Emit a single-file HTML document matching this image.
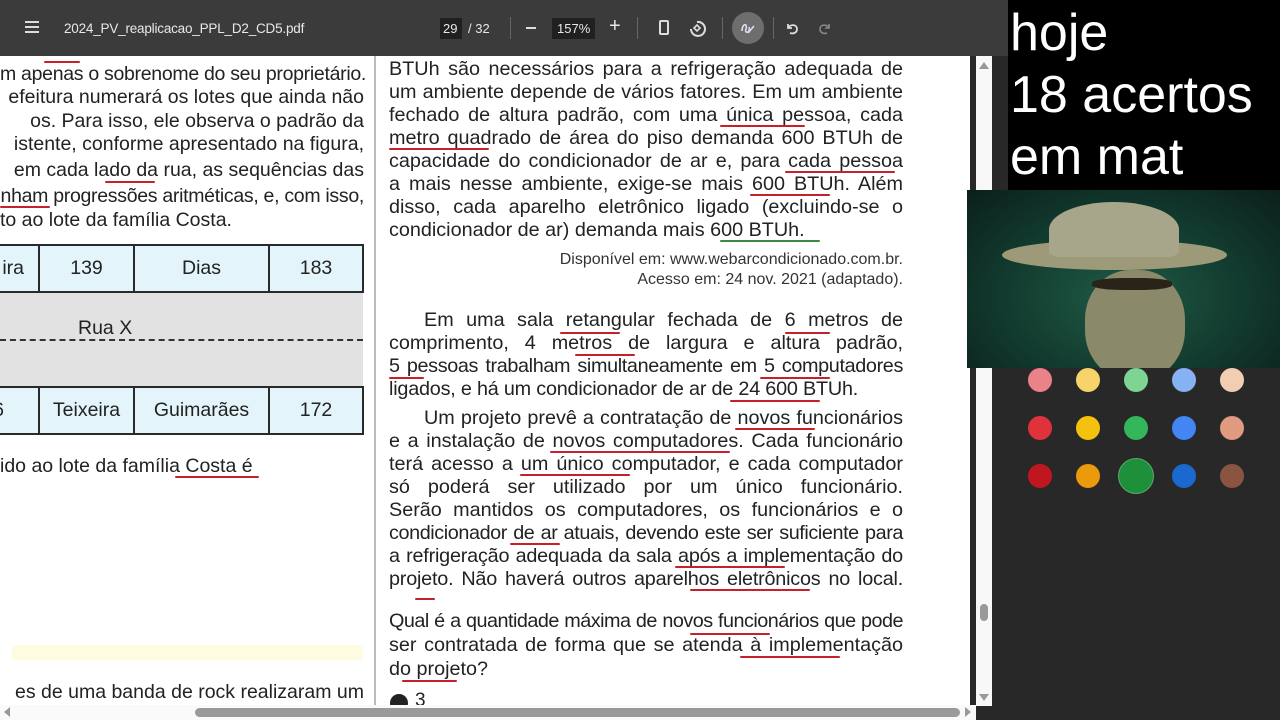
<!DOCTYPE html>
<html><head><meta charset="utf-8"><style>
*{margin:0;padding:0;box-sizing:border-box}
body{width:1280px;height:720px;overflow:hidden;position:relative;background:#282828;font-family:"Liberation Sans",sans-serif}
.abs{position:absolute}
.tb{left:0;top:0;width:1008px;height:56px;background:#3b3b3b;color:#e8e8e8}
.page{left:0;top:56px;width:970px;height:649px;background:#fff;overflow:hidden}
.rl{position:absolute;left:389px;width:514px;font-size:19.8px;color:#222;text-align:justify;text-align-last:justify;white-space:nowrap;line-height:22px}
.ll{position:absolute;left:0;width:364px;font-size:19.5px;color:#222;white-space:nowrap;line-height:22px;text-align:right}
.ul{position:absolute;height:2px;background:#c8202a;border-radius:1px}
.cell{position:absolute;background:#e3f5fb;border:2px solid #2a2a2a;font-size:19.5px;color:#222;display:flex;align-items:center;justify-content:center}
.dot{position:absolute;width:24px;height:24px;border-radius:50%}
</style></head><body>
<div class="abs tb">
 <div class="abs" style="left:25px;top:21px;width:14px;height:2px;background:#ddd;box-shadow:0 5px 0 #ddd,0 10px 0 #ddd"></div>
 <div class="abs" style="left:64px;top:21px;font-size:13.5px;letter-spacing:-0.2px">2024_PV_reaplicacao_PPL_D2_CD5.pdf</div>
 <div class="abs" style="left:440px;top:18px;width:22px;height:21px;background:#202020"></div>
 <div class="abs" style="left:443px;top:21px;font-size:13px">29</div>
 <div class="abs" style="left:468px;top:21px;font-size:13px">/ 32</div>
 <div class="abs" style="left:510px;top:17px;width:1px;height:22px;background:#666"></div>
 <div class="abs" style="left:526px;top:27px;width:10px;height:2px;background:#ddd"></div>
 <div class="abs" style="left:552px;top:18px;width:43px;height:21px;background:#202020"></div>
 <div class="abs" style="left:557px;top:21px;font-size:13px">157%</div>
 <div class="abs" style="left:609px;top:15px;font-size:20px">+</div>
 <div class="abs" style="left:637px;top:17px;width:1px;height:22px;background:#666"></div>
 <div class="abs" style="left:659px;top:20px;width:10px;height:15px;border:2px solid #ddd;border-radius:2px"></div>
 <svg class="abs" style="left:688px;top:19px" width="18" height="18"><path d="M9 3 A7 7 0 1 1 3 10" fill="none" stroke="#ddd" stroke-width="2"/><path d="M6 9 L9 6 L12 9 L9 12Z" fill="none" stroke="#ddd" stroke-width="1.6"/></svg>
 <div class="abs" style="left:722px;top:17px;width:1px;height:22px;background:#666"></div>
 <div class="abs" style="left:732px;top:12px;width:32px;height:32px;border-radius:50%;background:#6e6e6e"></div>
 <svg class="abs" style="left:739px;top:19px" width="18" height="18"><path d="M3 12 C3 4 9 4 7 10 C5 15 12 14 10 8 M9 14 L15 7" fill="none" stroke="#dde" stroke-width="1.6"/></svg>
 <div class="abs" style="left:773px;top:17px;width:1px;height:22px;background:#666"></div>
 <svg class="abs" style="left:784px;top:20px" width="16" height="16"><path d="M4 4 V8 H8 M4 8 C6 4 13 4 13 9 C13 13 9 14 6 13" fill="none" stroke="#ddd" stroke-width="1.8"/></svg>
 <svg class="abs" style="left:817px;top:20px" width="16" height="16"><path d="M12 4 V8 H8 M12 8 C10 4 3 4 3 9 C3 13 7 14 10 13" fill="none" stroke="#888" stroke-width="1.6"/></svg>
</div>
<div class="abs page">
 <div class="ll" style="top:7px;letter-spacing:-0.3px">m apenas o sobrenome do seu proprietário.</div>
 <div class="ll" style="top:30px">efeitura numerará os lotes que ainda não</div>
 <div class="ll" style="top:54px">os. Para isso, ele observa o padrão da</div>
 <div class="ll" style="top:77px">istente, conforme apresentado na figura,</div>
 <div class="ll" style="top:103px">em cada lado da rua, as sequências das</div>
 <div class="ll" style="top:129px;letter-spacing:-0.3px">nham progressões aritméticas, e, com isso,</div>
 <div class="ll" style="top:153px;text-align:left">to ao lote da família Costa.</div>
 <div class="abs" style="left:0;top:235px;width:363px;height:96px;background:#e2e2e2"></div>
 <div class="abs" style="left:0;top:283px;width:363px;border-top:2px dashed #333"></div>
 <div class="abs" style="left:78px;top:261px;font-size:19.5px;color:#222">Rua X</div>
 <div class="cell" style="left:-10px;top:188px;width:50px;height:49px;justify-content:flex-end;padding-right:14px">ira</div>
 <div class="cell" style="left:38px;top:188px;width:97px;height:49px">139</div>
 <div class="cell" style="left:133px;top:188px;width:137px;height:49px">Dias</div>
 <div class="cell" style="left:268px;top:188px;width:96px;height:49px">183</div>
 <div class="cell" style="left:-10px;top:330px;width:50px;height:49px;justify-content:flex-end;padding-right:34px">6</div>
 <div class="cell" style="left:38px;top:330px;width:97px;height:49px">Teixeira</div>
 <div class="cell" style="left:133px;top:330px;width:137px;height:49px">Guimarães</div>
 <div class="cell" style="left:268px;top:330px;width:96px;height:49px">172</div>
 <div class="ll" style="top:399px;text-align:left">ido ao lote da família Costa é</div>
 <div class="abs" style="left:12px;top:589px;width:351px;height:15px;background:#fdfbe0"></div>
 <div class="ll" style="top:625px">es de uma banda de rock realizaram um</div>
 <div class="ul" style="left:175px;top:420px;width:84px"></div>
 <div class="ul" style="left:44px;top:5px;width:36px"></div>
 <div class="ul" style="left:105px;top:125px;width:50px"></div>
 <div class="ul" style="left:0;top:150px;width:50px"></div>
 <div class="abs" style="left:374px;top:0;width:2px;height:649px;background:#bbb"></div>
 <div class="rl" style="top:2px">BTUh são necessários para a refrigeração adequada de</div>
 <div class="rl" style="top:25px">um ambiente depende de vários fatores. Em um ambiente</div>
 <div class="rl" style="top:48px">fechado de altura padrão, com uma única pessoa, cada</div>
 <div class="rl" style="top:71px">metro quadrado de área do piso demanda 600 BTUh de</div>
 <div class="rl" style="top:94px">capacidade do condicionador de ar e, para cada pessoa</div>
 <div class="rl" style="top:117px">a mais nesse ambiente, exige-se mais 600 BTUh. Além</div>
 <div class="rl" style="top:140px">disso, cada aparelho eletrônico ligado (excluindo-se o</div>
 <div class="rl" style="top:163px;text-align-last:left">condicionador de ar) demanda mais 600 BTUh.</div>
 <div class="abs" style="left:389px;width:514px;top:194px;font-size:16px;color:#333;text-align:right;line-height:20px">Disponível em: www.webarcondicionado.com.br.<br>Acesso em: 24 nov. 2021 (adaptado).</div>
 <div class="rl" style="top:253px;padding-left:35px">Em uma sala retangular fechada de 6 metros de</div>
 <div class="rl" style="top:276px">comprimento, 4 metros de largura e altura padrão,</div>
 <div class="rl" style="top:299px;letter-spacing:-0.35px">5 pessoas trabalham simultaneamente em 5 computadores</div>
 <div class="rl" style="top:322px;text-align-last:left;letter-spacing:-0.2px">ligados, e há um condicionador de ar de 24 600 BTUh.</div>
 <div class="rl" style="top:351px;padding-left:35px">Um projeto prevê a contratação de novos funcionários</div>
 <div class="rl" style="top:374px">e a instalação de novos computadores. Cada funcionário</div>
 <div class="rl" style="top:397px">terá acesso a um único computador, e cada computador</div>
 <div class="rl" style="top:420px">só poderá ser utilizado por um único funcionário.</div>
 <div class="rl" style="top:443px">Serão mantidos os computadores, os funcionários e o</div>
 <div class="rl" style="top:466px;letter-spacing:-0.4px">condicionador de ar atuais, devendo este ser suficiente para</div>
 <div class="rl" style="top:489px;letter-spacing:-0.2px">a refrigeração adequada da sala após a implementação do</div>
 <div class="rl" style="top:512px;letter-spacing:-0.2px">projeto. Não haverá outros aparelhos eletrônicos no local.</div>
 <div class="rl" style="top:554px;letter-spacing:-0.5px">Qual é a quantidade máxima de novos funcionários que pode</div>
 <div class="rl" style="top:578px">ser contratada de forma que se atenda à implementação</div>
 <div class="rl" style="top:602px;text-align-last:left">do projeto?</div>
 <div class="abs" style="left:390px;top:638px;width:18px;height:18px;border-radius:50%;background:#222"></div>
 <div class="abs" style="left:415px;top:634px;font-size:19px;color:#222">3</div>
 <div class="ul" style="left:720px;top:69px;width:85px"></div>
 <div class="ul" style="left:389px;top:92px;width:100px"></div>
 <div class="ul" style="left:785px;top:115px;width:110px"></div>
 <div class="ul" style="left:750px;top:138px;width:80px"></div>
 <div class="ul" style="left:720px;top:184px;width:100px;background:#3a8a40"></div>
 <div class="ul" style="left:560px;top:276px;width:60px"></div>
 <div class="ul" style="left:785px;top:276px;width:45px"></div>
 <div class="ul" style="left:575px;top:298px;width:60px"></div>
 <div class="ul" style="left:389px;top:321px;width:35px"></div>
 <div class="ul" style="left:760px;top:321px;width:70px"></div>
 <div class="ul" style="left:730px;top:344px;width:90px"></div>
 <div class="ul" style="left:735px;top:372px;width:80px"></div>
 <div class="ul" style="left:550px;top:395px;width:180px"></div>
 <div class="ul" style="left:520px;top:418px;width:110px"></div>
 <div class="ul" style="left:510px;top:487px;width:50px"></div>
 <div class="ul" style="left:675px;top:510px;width:110px"></div>
 <div class="ul" style="left:690px;top:533px;width:120px"></div>
 <div class="ul" style="left:415px;top:542px;width:20px"></div>
 <div class="ul" style="left:690px;top:577px;width:80px"></div>
 <div class="ul" style="left:740px;top:600px;width:100px"></div>
 <div class="ul" style="left:402px;top:624px;width:55px"></div>
</div>
<div class="abs" style="left:970px;top:56px;width:6px;height:650px;background:#282828"></div>
<div class="abs" style="left:976px;top:56px;width:16px;height:650px;background:#f8f8f8"></div>
<div class="abs" style="left:980px;top:604px;width:8px;height:17px;border-radius:4px;background:#999"></div>
<div class="abs" style="left:979px;top:62px;border:5px solid transparent;border-bottom:7px solid #999;border-top:0"></div>
<div class="abs" style="left:979px;top:694px;border:5px solid transparent;border-top:7px solid #999;border-bottom:0"></div>
<div class="abs" style="left:0;top:705px;width:976px;height:15px;background:#fafafa"></div>
<div class="abs" style="left:195px;top:708px;width:765px;height:9px;border-radius:5px;background:#9a9a9a"></div>
<div class="abs" style="left:4px;top:707px;border:5px solid transparent;border-right:6px solid #999;border-left:0"></div>
<div class="abs" style="left:965px;top:707px;border:5px solid transparent;border-left:6px solid #999;border-right:0"></div>
<div class="abs" style="left:1008px;top:0;width:272px;height:190px;background:#000;color:#fff;font-size:52px;line-height:62px;padding-left:2px;padding-top:2px">hoje<br>18 acertos<br>em mat</div>
<div class="abs" style="left:967px;top:190px;width:313px;height:178px;overflow:hidden;background:radial-gradient(ellipse at 50% 60%,#1f5a45 0%,#123a2e 55%,#0b1f1a 100%)">
 <div class="abs" style="left:118px;top:80px;width:100px;height:110px;border-radius:45%;background:#8a8a6a"></div>
 <div class="abs" style="left:35px;top:50px;width:225px;height:30px;border-radius:50%;background:#9c9a78"></div>
 <div class="abs" style="left:82px;top:12px;width:130px;height:55px;border-radius:50% 50% 10% 10%;background:#a8a68a"></div>
 <div class="abs" style="left:125px;top:88px;width:80px;height:12px;background:#2a2418;border-radius:40%"></div>
</div>
<div class="dot" style="left:1028px;top:368px;background:#ea8288"></div>
<div class="dot" style="left:1076px;top:368px;background:#f6d46a"></div>
<div class="dot" style="left:1124px;top:368px;background:#7fd494"></div>
<div class="dot" style="left:1172px;top:368px;background:#86b2f3"></div>
<div class="dot" style="left:1220px;top:368px;background:#f2cdb2"></div>
<div class="dot" style="left:1028px;top:416px;background:#e0323b"></div>
<div class="dot" style="left:1076px;top:416px;background:#f4c20d"></div>
<div class="dot" style="left:1124px;top:416px;background:#34b75a"></div>
<div class="dot" style="left:1172px;top:416px;background:#4285f4"></div>
<div class="dot" style="left:1220px;top:416px;background:#e09a80"></div>
<div class="dot" style="left:1028px;top:464px;background:#c0161f"></div>
<div class="dot" style="left:1076px;top:464px;background:#ec9a0c"></div>
<div class="dot" style="left:1118px;top:458px;width:36px;height:36px;background:#1e8f3a;border:1px solid #5aa86a"></div>
<div class="dot" style="left:1172px;top:464px;background:#1a68d0"></div>
<div class="dot" style="left:1220px;top:464px;background:#8a5440"></div>
</body></html>
